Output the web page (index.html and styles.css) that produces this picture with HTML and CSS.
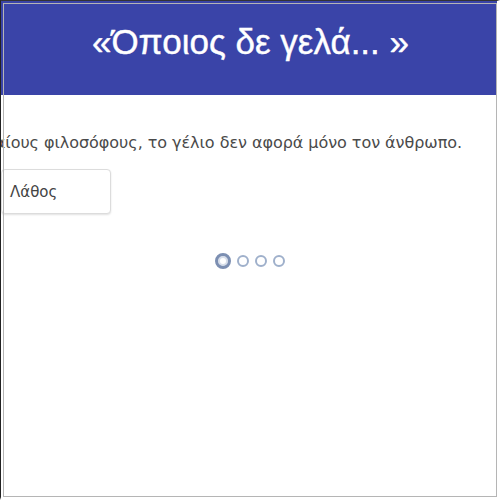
FILE: index.html
```html
<!DOCTYPE html>
<html lang="el">
<head>
<meta charset="utf-8">
<link rel="stylesheet" href="styles.css">
</head>
<body>
<div class="frame">
  <header class="banner">
    <h1 class="title">«Όποιος δε γελά... »</h1>
  </header>
  <main class="content">
    <div class="column">
      <p class="statement">Σύμφωνα με τους αρχαίους φιλοσόφους, το γέλιο δεν αφορά μόνο τον άνθρωπο.</p>
      <div class="answers">
        <button class="answer">Σωστό</button>
        <button class="answer">Λάθος</button>
      </div>
    </div>
    <div class="pager">
      <span class="dot active"></span>
      <span class="dot"></span>
      <span class="dot"></span>
      <span class="dot"></span>
    </div>
  </main>
</div>
</body>
</html>
```
FILE: styles.css
```css
html, body {
  margin: 0;
  padding: 0;
  background: #ffffff;
}
.frame {
  width: 500px;
  height: 500px;
  border-left: 1px solid #222;
  border-top: 1px solid #333;
  border-right: 3px solid #fff;
  border-bottom: 3px solid #fff;
  outline: 1px solid #b5b5b5;
  outline-offset: -4px;
  overflow: hidden;
  box-sizing: border-box;
  display: flex;
  flex-direction: column;
}
.banner {
  background: #3a44a8;
  height: 94px;
  flex: none;
  display: flex;
  justify-content: center;
  padding-top: 21px;
  padding-left: 3px;
  box-sizing: border-box;
}
.title {
  margin: 0;
  color: #fff;
  font-family: "Liberation Sans", Arial, sans-serif;
  font-weight: normal;
  font-size: 35px;
  line-height: 40px;
  -webkit-text-stroke: 0.4px #fff;
}
.content {
  flex: 1;
  overflow: hidden;
}
.column {
  width: 760px;
  margin-left: -298px;
  display: flex;
  flex-direction: column;
  align-items: flex-start;
}
.statement {
  margin: 38px 0 0 0;
  font-family: "DejaVu Sans", sans-serif;
  font-size: 16px;
  line-height: 20px;
  color: #4a4a4a;
  white-space: nowrap;
  align-self: flex-end;
  margin-right: 1px;
  letter-spacing: -0.05px;
}
.answers {
  display: flex;
  gap: 12px;
  margin-top: 16px;
  margin-left: 176px;
}
.answer {
  width: 110px;
  height: 45px;
  background: #fff;
  border: 1px solid #dcdcdc;
  border-radius: 4px;
  box-shadow: 0 1px 2px rgba(0,0,0,0.12);
  font-family: "DejaVu Sans", sans-serif;
  font-size: 15px;
  color: #444;
  text-align: left;
  padding: 0 0 0 8px;
}
.pager {
  display: flex;
  gap: 6px;
  align-items: center;
  justify-content: center;
  margin-top: 39px;
  padding-left: 2px;
}
.dot {
  width: 8px;
  height: 8px;
  border: 2.5px solid #9fb0cb;
  border-radius: 50%;
  background: #fff;
}
.dot.active {
  width: 10px;
  height: 10px;
  border: 3.5px solid #7c8fb2;
  box-shadow: inset 0 0 0 2px #d7deea;
}
```
